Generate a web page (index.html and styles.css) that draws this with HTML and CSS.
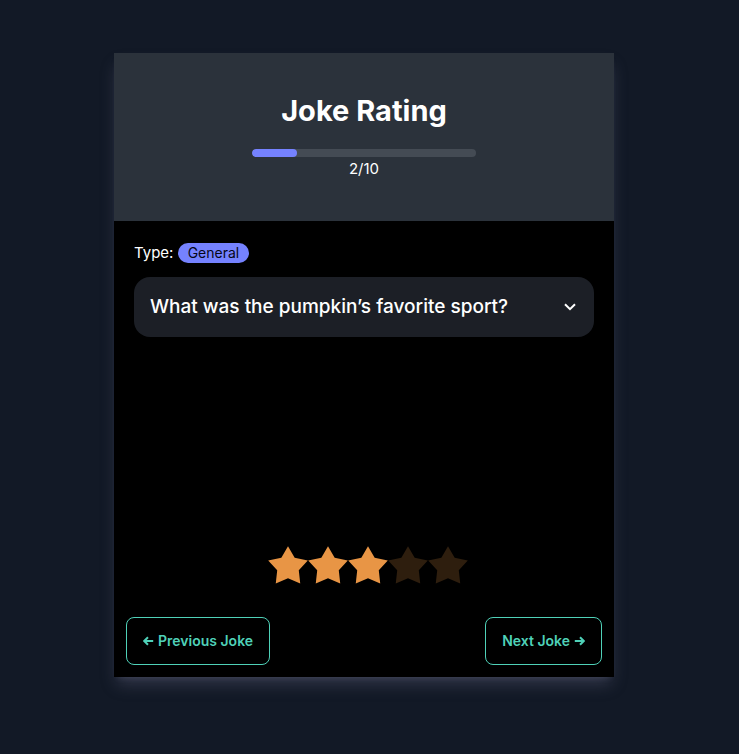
FILE: index.html
```html
<!DOCTYPE html>
<html lang="en">
<head>
<meta charset="utf-8">
<meta name="viewport" content="width=device-width, initial-scale=1">
<title>Joke Rating</title>
<link rel="stylesheet" href="styles.css">
</head>
<body>
<main class="card">
  <header class="card-header">
    <h1 class="title">Joke Rating</h1>
    <progress class="progress" value="2" max="10" aria-label="Jokes rated"></progress>
    <p class="count">2/10</p>
  </header>
  <section class="joke">
    <p class="type">Type: <span class="badge">General</span></p>
    <details class="collapse">
      <summary class="question">
        <span>What was the pumpkin’s favorite sport?</span>
        <svg class="chevron" viewBox="0 0 12 8" aria-hidden="true"><path d="M1 1.2 6 6.2 11 1.2"/></svg>
      </summary>
    </details>
  </section>
  <div class="rating" role="radiogroup" aria-label="Rating">
    <input class="no-star" type="radio" name="rating" aria-label="No rating">
    <input class="star" type="radio" name="rating" aria-label="1 star">
    <input class="star" type="radio" name="rating" aria-label="2 stars">
    <input class="star" type="radio" name="rating" aria-label="3 stars" checked>
    <input class="star" type="radio" name="rating" aria-label="4 stars">
    <input class="star" type="radio" name="rating" aria-label="5 stars">
  </div>
  <nav class="actions">
    <button class="btn" type="button"><svg class="arrow" viewBox="0 0 11 10" aria-hidden="true"><path d="M10.2 5H1.4M5 1.2 1.2 5 5 8.8"/></svg>Previous Joke</button>
    <button class="btn" type="button">Next Joke<svg class="arrow" viewBox="0 0 11 10" aria-hidden="true"><path d="M.8 5h8.8M6 1.2 9.8 5 6 8.8"/></svg></button>
  </nav>
</main>
</body>
</html>
```
FILE: styles.css
```css
* { box-sizing: border-box; }

body {
  margin: 0;
  padding: 53px 11px 77px 0;
  background: #121926;
  color: #fff;
  font-family: Inter, "Liberation Sans", sans-serif;
  font-size: 15px;
  line-height: 24px;
}

h1, p { margin: 0; }

.card {
  display: flex;
  flex-direction: column;
  max-width: 500px;
  min-height: 624px;
  margin: 0 auto;
  background: #000;
  box-shadow: 0 10px 15px -3px rgba(115, 115, 145, 0.34), 0 4px 6px -4px rgba(115, 115, 145, 0.34);
}

.card-header {
  display: flex;
  flex-direction: column;
  align-items: center;
  padding: 40px 20px;
  background: #2b323b;
}

.title {
  font-size: 29px;
  line-height: 36px;
  font-weight: 700;
}

.progress {
  appearance: none;
  width: 224px;
  height: 8px;
  margin-top: 20px;
  border: 0;
  border-radius: 8px;
  overflow: hidden;
  background: #444b54;
}

.progress::-webkit-progress-bar { background: #444b54; }

.progress::-webkit-progress-value {
  border-radius: 8px;
  background: #7582ff;
}

.progress::-moz-progress-bar {
  border-radius: 8px;
  background: #7582ff;
}

.joke { padding: 20px; }

.badge {
  display: inline-block;
  padding: 0 10px;
  border-radius: 10px;
  background: #7582ff;
  color: #050617;
  font-size: 14px;
  line-height: 20px;
}

.collapse {
  margin-top: 12px;
  border-radius: 16px;
  background: #1c1f26;
}

.question {
  display: flex;
  align-items: center;
  justify-content: space-between;
  padding: 16px;
  list-style: none;
  font-size: 19px;
  line-height: 28px;
  font-weight: 500;
  cursor: pointer;
}

.chevron {
  width: 12px;
  height: 8px;
  margin-right: 2px;
  fill: none;
  stroke: #fff;
  stroke-width: 2;
}

.rating {
  display: flex;
  justify-content: center;
  margin-top: auto;
}

.no-star, .star {
  appearance: none;
  width: 40px;
  height: 40px;
  margin: 0;
  cursor: pointer;
}

.no-star { width: 8px; }

.star {
  background: #e89545;
  clip-path: polygon(50% 82.84%, 19.39% 96.5%, 23.04% 63.42%, 0.47% 38.79%, 33.34% 32.02%, 50% 3.13%, 66.66% 32.02%, 99.53% 38.79%, 76.96% 63.42%, 80.61% 96.5%);
}

.star:checked ~ .star { background: #2e1e0e; }

.actions {
  display: flex;
  justify-content: space-between;
  margin-top: 20px;
  padding: 12px;
}

.btn {
  display: flex;
  align-items: center;
  gap: 4px;
  height: 48px;
  padding: 0 16px;
  border: 1px solid #4fd1b8;
  border-radius: 8px;
  background: transparent;
  color: #4fd1b8;
  font-family: inherit;
  font-size: 14px;
  line-height: 14px;
  font-weight: 600;
  cursor: pointer;
}

.arrow {
  width: 11px;
  height: 10px;
  fill: none;
  stroke: currentColor;
  stroke-width: 2;
}
```
